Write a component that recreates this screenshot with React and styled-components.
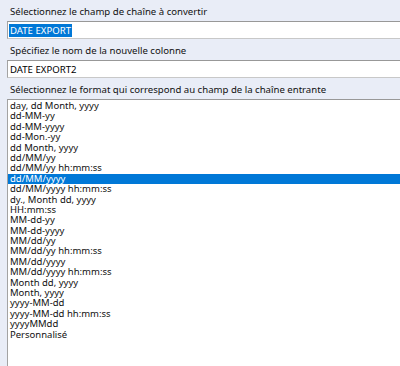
import styled, { createGlobalStyle } from 'styled-components';

const GlobalStyle = createGlobalStyle`
  html, body {
    margin: 0;
    padding: 0;
    background: #e9edf7;
  }
  body {
    font-family: "Noto Sans", "Liberation Sans", sans-serif;
    color: #000;
  }
`;

const Viewport = styled.div`
  width: 400px;
  height: 366px;
  overflow: hidden;
`;

const Panel = styled.div`
  width: 420px;
  padding-left: 7px;
  display: flex;
  flex-direction: column;
`;

const Label = styled.div`
  height: 21px;
  box-sizing: border-box;
  padding: 5px 0 0 3px;
  font-size: 9.6px;
  line-height: 13px;
  color: #111;
  white-space: nowrap;
`;

const Field = styled.div`
  height: 18px;
  box-sizing: border-box;
  background: #fff;
  border: 1px solid #a3a3a3;
  border-top-color: #989898;
  border-bottom-color: #c8c8c8;
  display: flex;
  align-items: center;
  padding-left: 1px;
  font-size: 9.6px;
  white-space: nowrap;
`;

const Selected = styled.span`
  background: ${(p) => (p.$active ? '#0078d7' : 'transparent')};
  color: ${(p) => (p.$active ? '#fff' : '#000')};
  padding: 1px;
  line-height: 11px;
`;

const List = styled.ul`
  list-style: none;
  margin: 0;
  padding: 1px 0 0 0;
  height: 290px;
  background: #fff;
  border: 1px solid #a3a3a3;
  border-top-color: #989898;
  border-right: none;
  border-bottom: none;
`;

const Item = styled.li`
  height: 10.4px;
  line-height: 10.4px;
  padding-left: 2px;
  font-size: 9.5px;
  white-space: nowrap;
  background: ${(p) => (p.$selected ? '#0078d7' : 'transparent')};
  color: ${(p) => (p.$selected ? '#fff' : '#111')};
`;

const formats = [
  'day, dd Month, yyyy',
  'dd-MM-yy',
  'dd-MM-yyyy',
  'dd-Mon.-yy',
  'dd Month, yyyy',
  'dd/MM/yy',
  'dd/MM/yy hh:mm:ss',
  'dd/MM/yyyy',
  'dd/MM/yyyy hh:mm:ss',
  'dy., Month dd, yyyy',
  'HH:mm:ss',
  'MM-dd-yy',
  'MM-dd-yyyy',
  'MM/dd/yy',
  'MM/dd/yy hh:mm:ss',
  'MM/dd/yyyy',
  'MM/dd/yyyy hh:mm:ss',
  'Month dd, yyyy',
  'Month, yyyy',
  'yyyy-MM-dd',
  'yyyy-MM-dd hh:mm:ss',
  'yyyyMMdd',
  'Personnalisé',
];

export default function App() {
  const selected = 'dd/MM/yyyy';
  return (
    <Viewport>
      <GlobalStyle />
      <Panel>
        <Label>Sélectionnez le champ de chaîne à convertir</Label>
        <Field>
          <Selected $active>DATE EXPORT</Selected>
        </Field>
        <Label>Spécifiez le nom de la nouvelle colonne</Label>
        <Field>
          <Selected>DATE EXPORT2</Selected>
        </Field>
        <Label>Sélectionnez le format qui correspond au champ de la chaîne entrante</Label>
        <List>
          {formats.map((f) => (
            <Item key={f} $selected={f === selected}>
              {f}
            </Item>
          ))}
        </List>
      </Panel>
    </Viewport>
  );
}
